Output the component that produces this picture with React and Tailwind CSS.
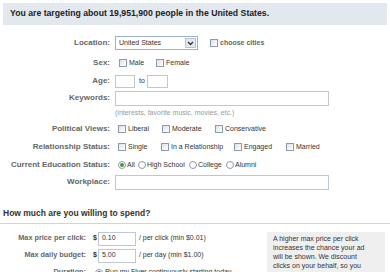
import React from 'react';

function Checkbox() {
  return <span className="inline-block w-[8px] h-[8px] shrink-0 border border-[#8d9ab0] bg-gradient-to-br from-[#dde2ea] to-white" />;
}

function Radio({ checked }) {
  return (
    <span className="inline-flex items-center justify-center w-[8px] h-[8px] shrink-0 rounded-full border border-[#8d9ab0] bg-white">
      {checked && <span className="w-[4px] h-[4px] rounded-full bg-[#3c9c2e]" />}
    </span>
  );
}

function Option({ w, label, radio, checked }) {
  return (
    <span className={`flex items-center shrink-0 ${w}`}>
      {radio ? <Radio checked={checked} /> : <Checkbox />}
      <span className={radio ? 'ml-[1px]' : 'ml-[2px]'}>{label}</span>
    </span>
  );
}

function Row({ label, h = 'h-[18px]', children }) {
  return (
    <div className={`flex items-center ${h}`}>
      <div className="w-[110px] shrink-0 text-right text-[8px] font-bold text-[#666]">{label}</div>
      <div className="ml-[5px] flex items-center text-[7px] text-[#333]">{children}</div>
    </div>
  );
}

function TextBox({ w, h = 'h-[15px]', value }) {
  return (
    <div className={`${w} ${h} border border-[#bdc7d8] bg-white flex items-center pl-[3px] text-[7px] text-[#333]`}>
      {value}
    </div>
  );
}

function SpendRow({ label, value, note }) {
  return (
    <div className="flex items-center h-[17px]">
      <div className="w-[86px] shrink-0 text-right text-[7.3px] font-bold text-[#666]">{label}</div>
      <span className="ml-[7px] text-[7px] font-bold text-[#333]">$</span>
      <div className="ml-[1px] w-[38px] h-[14px] border border-[#bdc7d8] flex items-center pl-[3px] text-[7px] text-[#333]">{value}</div>
      <span className="ml-[3px] text-[7px] text-[#333]">{note}</span>
    </div>
  );
}

export default function App() {
  return (
    <div className="w-[390px] h-[272px] overflow-hidden bg-white font-['Liberation_Sans',Arial,sans-serif] text-[#333]">
      <div className="mx-[3px] mt-[3px] h-[22px] bg-[#e3e7ee] flex items-center pl-[7px] text-[8.7px] font-bold text-[#222]">
        You are targeting about 19,951,900 people in the United States.
      </div>

      <div className="mt-[9px]">
        <Row label="Location:">
          <div className="w-[83px] h-[14px] border border-[#9fb0c8] bg-white flex items-center justify-between pl-[3px] pr-[1px]">
            <span>United States</span>
            <span className="w-[11px] h-[10px] bg-[#e4e8f0] border border-[#b8c3d6] flex items-center justify-center">
              <svg width="7" height="5" viewBox="0 0 7 5">
                <path d="M1 1 L3.5 3.5 L6 1" fill="none" stroke="#333" strokeWidth="1.4" />
              </svg>
            </span>
          </div>
          <span className="ml-[12px] flex items-center">
            <Checkbox />
            <span className="ml-[2px] font-bold text-[#666]">choose cities</span>
          </span>
        </Row>
        <div className="mt-[2px]" />
        <Row label="Sex:">
          <span className="ml-[4px] flex">
            <Option w="w-[37px]" label="Male" />
            <Option label="Female" />
          </span>
        </Row>
        <Row label="Age:">
          <TextBox w="w-[20px]" h="h-[13px]" />
          <span className="ml-[4px]">to</span>
          <span className="ml-[2px]"><TextBox w="w-[21px]" h="h-[13px]" /></span>
        </Row>
        <Row label="Keywords:" h="h-[16px]">
          <TextBox w="w-[214px]" />
        </Row>
        <Row label="" h="h-[14px]">
          <span className="text-[#999]">(interests, favorite music, movies, etc.)</span>
        </Row>
        <Row label="Political Views:">
          <span className="ml-[3px] flex">
            <Option w="w-[44px]" label="Liberal" />
            <Option w="w-[53px]" label="Moderate" />
            <Option label="Conservative" />
          </span>
        </Row>
        <Row label="Relationship Status:">
          <span className="ml-[3px] flex">
            <Option w="w-[43px]" label="Single" />
            <Option w="w-[73px]" label="In a Relationship" />
            <Option w="w-[52px]" label="Engaged" />
            <Option label="Married" />
          </span>
        </Row>
        <Row label="Current Education Status:">
          <span className="ml-[3px] flex">
            <Option w="w-[20px]" label="All" radio checked />
            <Option w="w-[51px]" label="High School" radio />
            <Option w="w-[37px]" label="College" radio />
            <Option label="Alumni" radio />
          </span>
        </Row>
        <Row label="Workplace:" h="h-[16px]">
          <TextBox w="w-[214px]" />
        </Row>
      </div>

      <div className="mt-[15px] h-[19px] pt-[3px] pl-[3px] border-b border-[#d3d3d3] text-[8.5px] leading-[10px] font-bold text-[#333]">
        How much are you willing to spend?
      </div>

      <div className="flex justify-between">
        <div className="mt-[6px]">
          <SpendRow label="Max price per click:" value="0.10" note="/ per click (min $0.01)" />
          <SpendRow label="Max daily budget:" value="5.00" note="/ per day (min $1.00)" />
          <div className="flex items-center h-[17px]">
            <div className="w-[86px] shrink-0 text-right text-[7.3px] font-bold text-[#666]">Duration:</div>
            <span className="ml-[9px] flex items-center text-[7px] text-[#333]">
              <Radio checked />
              <span className="ml-[2px]">Run my Flyer continuously starting today</span>
            </span>
          </div>
        </div>
        <div className="mt-[8px] mr-[5px] w-[118px] h-[60px] bg-[#efefef] pl-[6px] pt-[2px] text-[7px] leading-[9px] text-[#333] whitespace-nowrap">
          A higher max price per click<br />
          increases the chance your ad<br />
          will be shown. We discount<br />
          clicks on your behalf, so you
        </div>
      </div>
    </div>
  );
}
